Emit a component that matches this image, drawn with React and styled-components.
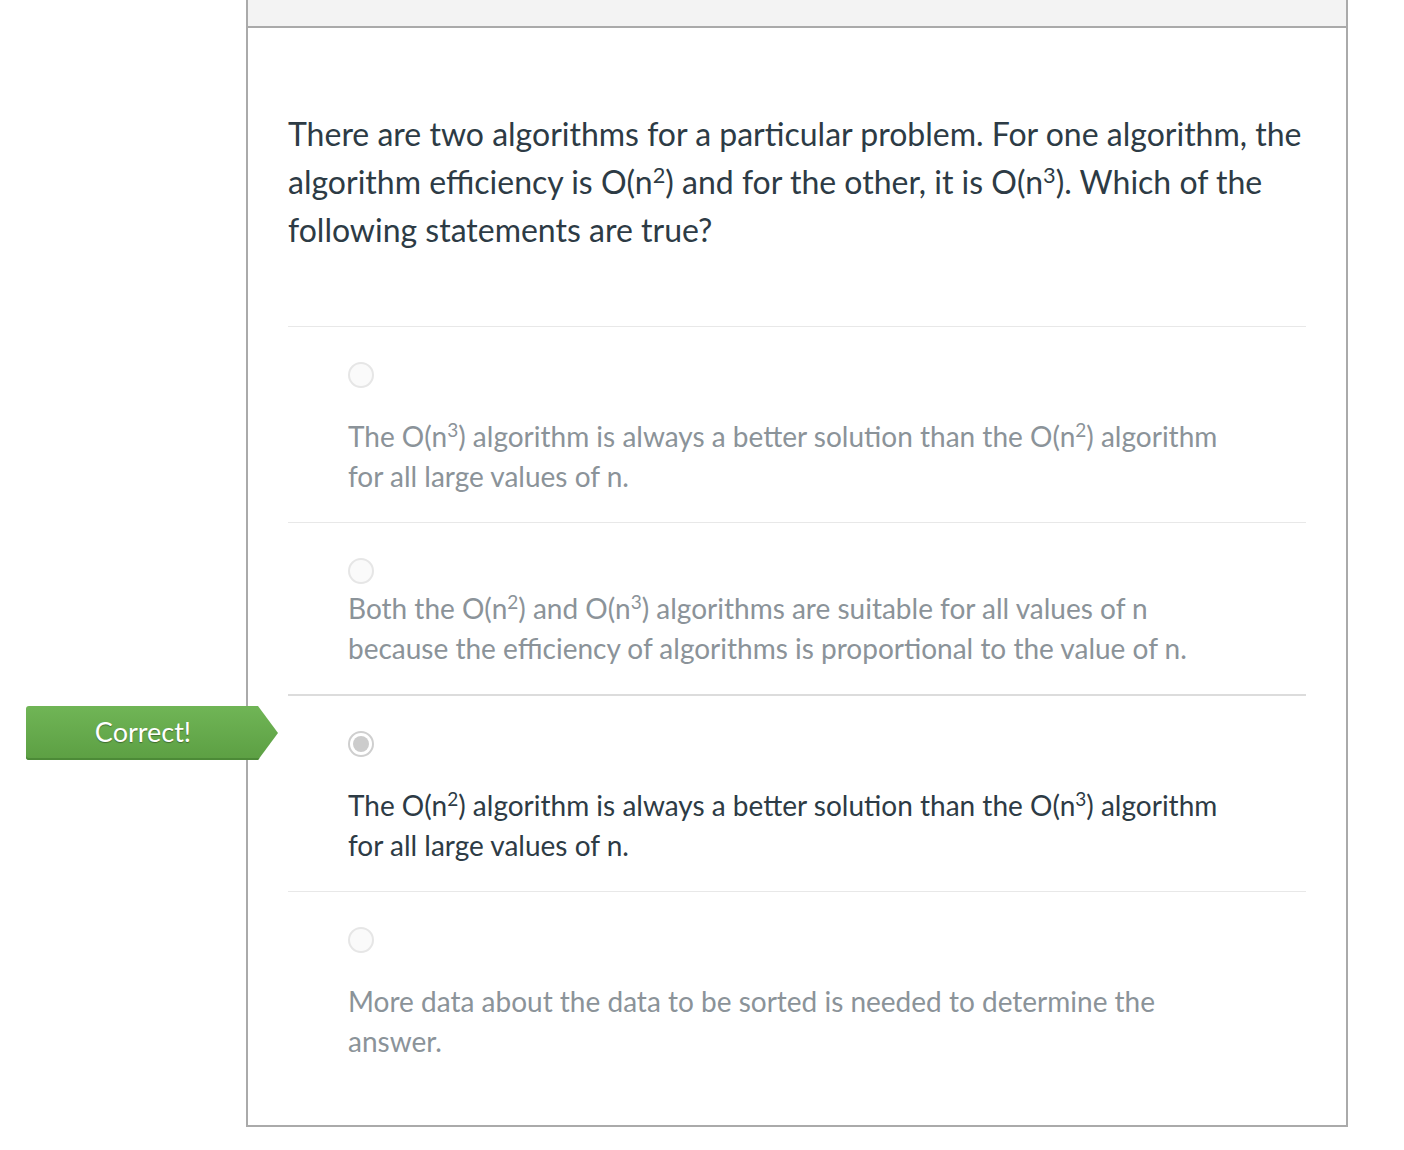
import React from "react";
import styled, { createGlobalStyle } from "styled-components";

const GlobalStyle = createGlobalStyle`
  html, body { margin: 0; padding: 0; background: #fff; }
  body { font-family: Lato, "Open Sans", sans-serif; }
`;

const Page = styled.div`
  display: flex;
  padding-left: 246px;
  width: 1404px;
  box-sizing: border-box;
`;

const Card = styled.div`
  width: 1102px;
  border: 2px solid #aaaaaa;
  border-top: none;
  box-sizing: border-box;
`;

const CardHeader = styled.div`
  height: 26px;
  background: #f3f3f3;
  border-bottom: 2px solid #aaaaaa;
`;

const CardBody = styled.div`
  padding: 82px 40px 38px 40px;
`;

const Question = styled.p`
  margin: 0 0 72px;
  font-size: 32px;
  line-height: 48px;
  color: #2d3b45;
`;

const Sup = styled.sup`
  font-size: 0.68em;
  line-height: 0;
  vertical-align: 0.5em;
`;

const AnswerList = styled.div`
  display: flex;
  flex-direction: column;
`;

const Answer = styled.div`
  position: relative;
  border-top: ${p => (p.$dark ? "2px solid #dcdcdc" : "1px solid #e8e8e8")};
  padding: 35px 0 26px 60px;
  display: flex;
  flex-direction: column;
  gap: ${p => p.$gap}px;
`;

const Radio = styled.span`
  width: 26px;
  height: 26px;
  border-radius: 50%;
  box-sizing: border-box;
  border: 2px solid ${p => (p.$checked ? "#cfcfcf" : "#e6e6e6")};
  background: ${p => (p.$checked ? "#fff" : "#fafafa")};
  display: flex;
  align-items: center;
  justify-content: center;
  &::after {
    content: "";
    display: ${p => (p.$checked ? "block" : "none")};
    width: 16px;
    height: 16px;
    border-radius: 50%;
    background: #cccccc;
  }
`;

const AnswerText = styled.div`
  font-size: 28px;
  line-height: 40px;
  color: ${p => (p.$selected ? "#2d3b45" : "#8b9399")};
  max-width: 900px;
`;

const Badge = styled.div`
  position: absolute;
  left: -262px;
  top: 10px;
  width: 252px;
  height: 54px;
  box-sizing: border-box;
  padding: 0 18px 3px 0;
  display: flex;
  align-items: center;
  justify-content: center;
  color: #fff;
  font-size: 27px;
  text-shadow: 0 1px 1px rgba(0, 0, 0, 0.35);
  background: linear-gradient(#70b556, #5c9f43);
  border-radius: 3px 0 0 3px;
  clip-path: polygon(0 0, 232px 0, 252px 50%, 232px 100%, 0 100%);
  box-shadow: inset 0 -2px 0 #4c8a37;
`;

const answers = [
  {
    text: <>The O(n<Sup>3</Sup>) algorithm is always a better solution than the O(n<Sup>2</Sup>) algorithm for all large values of n.</>,
    gap: 28,
  },
  {
    text: <>Both the O(n<Sup>2</Sup>) and O(n<Sup>3</Sup>) algorithms are suitable for all values of n because the efficiency of algorithms is proportional to the value of n.</>,
    gap: 4,
  },
  {
    text: <>The O(n<Sup>2</Sup>) algorithm is always a better solution than the O(n<Sup>3</Sup>) algorithm for all large values of n.</>,
    gap: 28,
    selected: true,
    dark: true,
  },
  {
    text: <>More data about the data to be sorted is needed to determine the answer.</>,
    gap: 28,
  },
];

export default function App() {
  return (
    <>
      <GlobalStyle />
      <Page>
        <Card>
          <CardHeader />
          <CardBody>
            <Question>
              There are two algorithms for a particular problem. For one algorithm, the
              algorithm efficiency is O(n<Sup>2</Sup>) and for the other, it is O(n<Sup>3</Sup>). Which of the
              following statements are true?
            </Question>
            <AnswerList>
              {answers.map((a, i) => (
                <Answer key={i} $gap={a.gap} $dark={a.dark}>
                  {a.selected && <Badge>Correct!</Badge>}
                  <Radio $checked={a.selected} />
                  <AnswerText $selected={a.selected}>{a.text}</AnswerText>
                </Answer>
              ))}
            </AnswerList>
          </CardBody>
        </Card>
      </Page>
    </>
  );
}
